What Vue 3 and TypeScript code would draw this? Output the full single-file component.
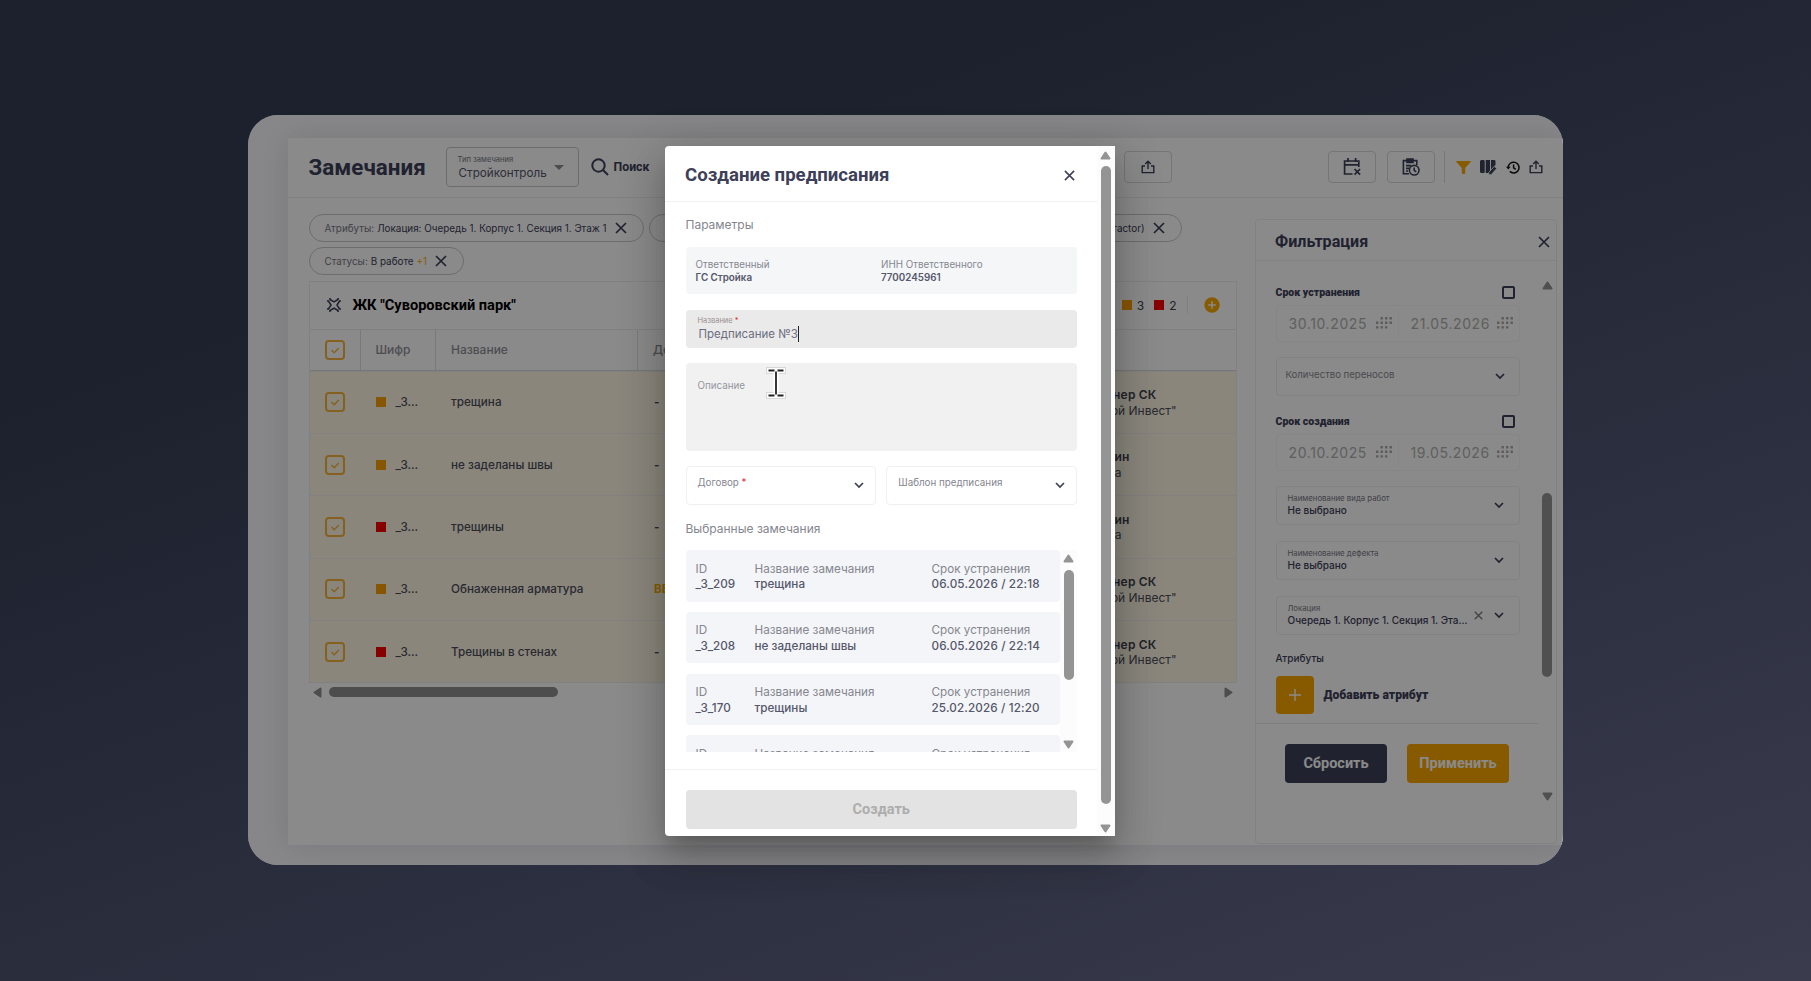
<template>
  <div class="stage">
    <div class="frame">
      <div class="app">
        <header class="topbar">
          <h1 class="page-title">Замечания</h1>
          <div class="type-select">
            <div>
              <div class="type-label">Тип замечания</div>
              <div class="type-value">Стройконтроль</div>
            </div>
            <svg class="caret-down" width="10" height="5" viewBox="0 0 10 5"><path d="M0 0h10L5 5z" /></svg>
          </div>
          <div class="search">
            <svg width="18" height="18" viewBox="0 0 18 18" fill="none" stroke="#3d4058" stroke-width="2"><circle cx="7.5" cy="7.5" r="6.2" /><path d="M12 12l5 5" /></svg>
            <span>Поиск</span>
          </div>
          <div class="tool-btn export-btn">
            <svg class="share" viewBox="0 0 14 14"><path d="M4 6H1.2v6.6h11.6V6H10M7 9V1.4M4.2 4L7 1.2 9.8 4" /></svg>
          </div>
          <div class="tool-btn">
            <svg width="18" height="18" viewBox="0 0 18 18" fill="none" stroke="#3d4058" stroke-width="1.7"><path d="M9.5 16H1.6V3h14.2v6M1.6 6.8h14.2M5 0v4M12.6 0v4M11.5 11l5.6 5.6M17.1 11l-5.6 5.6" /></svg>
          </div>
          <div class="tool-btn last">
            <svg width="18" height="18" viewBox="0 0 18 18" fill="none" stroke="#3d4058" stroke-width="1.6"><path d="M7 15.8H1.4V2.6h13.4V7M5 1h6v3.4H5zM4 7.6h5M4 10.4h3M4 13h2" /><circle cx="12.2" cy="12.2" r="4.8" /><path d="M12.2 9.5v2.8l2 1.6" /></svg>
          </div>
          <div class="topbar-divider"></div>
          <div class="topbar-icons">
            <svg width="15" height="13" viewBox="0 0 15 13"><path d="M.8 0h13.4q1 0 .4 1L9.2 7v5q0 1-1 1H7q-1.2-.2-1.2-1.2V7L.4 1Q-.2 0 .8 0z" fill="#f9ab00" /></svg>
            <svg width="17" height="15" viewBox="0 0 17 15" fill="#3d4058"><path d="M0 1.5Q0 0 1.5 0h2.3q.9 0 .9 1.5v10q0 1.500-.9 1.500H1.500Q0 13 0 11.500zM5.700 0h4.300v13H5.700zM11 0h3.200q1.300 0 1.300 1.300V5L11 9.500z" /><path d="M8.800 14.800v-2.500l5.600-6 2.300 2.200-5.600 6.300z" stroke="#fff" stroke-width=".8" /></svg>
            <svg width="14" height="13" viewBox="0 0 14 13" fill="none" stroke="#111" stroke-width="1.5"><path d="M2.2 6.500a5.400 5.400 0 1 1 1.600 3.900M7.600 3.500v3.300l2.200 1.500" /><path d="M0 5.800h4.600L2.300 8.600z" fill="#111" stroke="none" /></svg>
            <svg class="share" viewBox="0 0 14 14"><path d="M4 6H1.2v6.6h11.6V6H10M7 9V1.4M4.2 4L7 1.2 9.8 4" /></svg>
          </div>
        </header>

        <div class="body">
          <main class="main">
            <div class="chips">
              <div class="chip chip-attrs"><span class="chip-key">Атрибуты:</span><span>Локация: Очередь 1. Корпус 1. Секция 1. Этаж 1</span><svg class="cross chip-cross" viewBox="0 0 12 12"><path d="M1 1l10 10M11 1L1 11" /></svg></div>
              <div class="chip chip-wide"><span>Ответственный: ГС Стройка (contractor)</span><svg class="cross chip-cross" viewBox="0 0 12 12"><path d="M1 1l10 10M11 1L1 11" /></svg></div>
              <div class="chip chip-status"><span class="chip-key">Статусы:</span><span>В работе <i>+1</i></span><svg class="cross chip-cross" viewBox="0 0 12 12"><path d="M1 1l10 10M11 1L1 11" /></svg></div>
            </div>

            <section class="table">
              <div class="table-title">
                <svg width="14" height="14" viewBox="0 0 14 14" fill="none" stroke="#3d4058" stroke-width="1.6"><path d="M3 0v1.500l4 2.400 4-2.400V0M3 14v-1.500l4-2.400 4 2.400V14M0 3h1.500L4 7l-2.500 4H0M14 3h-1.500L10 7l2.500 4H14" /></svg>
                <b>ЖК "Суворовский парк"</b>
                <div class="counts">
                  <i class="sq orange"></i><span>3</span>
                  <i class="sq red"></i><span>2</span>
                  <em></em>
                  <svg width="16" height="16" viewBox="0 0 16 16"><circle cx="8" cy="8" r="7.7" fill="#f9ab00" /><path d="M8 4.2v7.6M4.2 8h7.6" stroke="#fff" stroke-width="1.5" /></svg>
                </div>
              </div>
              <div class="table-row table-head">
                <div class="cell"><span class="check"><svg viewBox="0 0 20 20"><path d="M6.5 10l2.700 2.700 4.600-4.700" /></svg></span></div>
                <div class="cell">Шифр</div>
                <div class="cell">Название</div>
                <div class="cell">Договор</div>
                <div class="cell"></div>
              </div>
              <div v-for="row in rows" :key="row.name" class="table-row">
                <div class="cell"><span class="check"><svg viewBox="0 0 20 20"><path d="M6.5 10l2.700 2.700 4.600-4.700" /></svg></span></div>
                <div class="cell"><i class="sq" :class="row.color"></i><span class="code">_3...</span></div>
                <div class="cell">{{ row.name }}</div>
                <div class="cell contract" :class="{ accent: row.contract !== '-' }">{{ row.contract }}</div>
                <div class="cell person" :class="{ short: row.org === 'ГС Стройка' }">
                  <b>{{ row.person }}</b>
                  <span>{{ row.org }}</span>
                </div>
              </div>
            </section>
            <div class="h-scroll">
              <svg width="9" height="11" viewBox="0 0 9 11"><path d="M7.500 1.500v8L1.500 5.500z" /></svg>
              <div class="h-thumb"></div>
              <svg width="9" height="11" viewBox="0 0 9 11"><path d="M1.500 1.500v8l6-4z" /></svg>
            </div>
          </main>

          <aside class="filter">
            <div class="filter-head">
              <b>Фильтрация</b>
              <svg class="cross filter-cross" viewBox="0 0 12 12"><path d="M1 1l10 10M11 1L1 11" /></svg>
            </div>
            <div class="filter-main">
              <div class="filter-form">
                <template v-for="d in dates" :key="d.title">
                  <div class="date-title"><b>{{ d.title }}</b><i></i></div>
                  <div class="date-box">
                    <div v-for="v in [d.from, d.to]" :key="v">
                      <span>{{ v }}</span>
                      <svg width="16" height="12" viewBox="0 0 16 12" fill="#aaa"><path d="M4.5 0h2.400v2.400H4.500zM9 0h2.400v2.400H9zM13.500 0h2.400v2.400h-2.400zM0 4.600h2.400V7H0zM4.500 4.600h2.400V7H4.500zM9 4.600h2.400V7H9zM13.500 4.600h2.400V7h-2.400zM0 9.200h2.400v2.400H0zM4.500 9.200h2.400v2.400H4.500zM9 9.200h2.400v2.400H9z" /></svg>
                    </div>
                  </div>
                  <div v-if="d.moves" class="f-select empty">
                    <span>Количество переносов</span>
                    <svg class="chevron" viewBox="0 0 10 7"><path d="M1 1l4 4 4-4" /></svg>
                  </div>
                </template>
                <div v-for="f in filters" :key="f.label" class="f-select">
                  <div>
                    <small>{{ f.label }}</small>
                    <span>{{ f.value }}</span>
                  </div>
                  <svg v-if="f.clear" class="cross clear" viewBox="0 0 12 12"><path d="M1 1l10 10M11 1L1 11" /></svg>
                  <svg class="chevron" viewBox="0 0 10 7"><path d="M1 1l4 4 4-4" /></svg>
                </div>
                <div class="attr-label">Атрибуты</div>
                <div class="attr-add">
                  <button><svg width="12" height="12" viewBox="0 0 12 12"><path d="M6 0v12M0 6h12" stroke="#fff" stroke-width="1.4" /></svg></button>
                  <b>Добавить атрибут</b>
                </div>
                <div class="filter-actions">
                  <button class="reset">Сбросить</button>
                  <button class="apply">Применить</button>
                </div>
              </div>
              <div class="v-scroll filter-scroll">
                <svg width="11" height="9" viewBox="0 0 11 9"><path d="M5.500 1.500L9.500 7.500h-8z" /></svg>
                <div class="v-thumb"></div>
                <svg width="11" height="9" viewBox="0 0 11 9"><path d="M5.500 7.500L9.500 1.500h-8z" /></svg>
              </div>
            </div>
          </aside>
        </div>
      </div>
      <div class="overlay"></div>
    </div>

    <div class="modal">
      <div class="modal-content">
        <div class="modal-head">
          <h2>Создание предписания</h2>
          <svg class="cross modal-cross" viewBox="0 0 12 12"><path d="M1 1l10 10M11 1L1 11" /></svg>
        </div>
        <div class="modal-body">
          <div class="section-label">Параметры</div>
          <div class="params">
            <div><span>Ответственный</span><b>ГС Стройка</b></div>
            <div><span>ИНН Ответственного</span><b>7700245961</b></div>
          </div>
          <div class="input">
            <label>Название <i>*</i></label>
            <div class="value">{{ title }}<span class="caret"></span></div>
          </div>
          <div class="textarea">
            Описание
            <svg class="ibeam" width="20" height="32" viewBox="0 0 20 32">
              <path d="M0 3.5h20M0 28.500h20" stroke="#d8d8d8" stroke-width="7" />
              <path d="M1 3.500h18M1 28.500h18M10 3v26" stroke="#fff" stroke-width="5" />
              <path d="M2.500 3.500h6M11.500 3.500h6M2.500 28.500h6M11.500 28.500h6M10 4.500v23" stroke="#222" stroke-width="1.800" />
            </svg>
          </div>
          <div class="selects">
            <div class="select"><span>Договор <i>*</i></span><svg class="chevron" viewBox="0 0 10 7"><path d="M1 1l4 4 4-4" /></svg></div>
            <div class="select"><span>Шаблон предписания</span><svg class="chevron" viewBox="0 0 10 7"><path d="M1 1l4 4 4-4" /></svg></div>
          </div>
          <div class="section-label">Выбранные замечания</div>
          <div class="list">
            <div class="items">
              <div v-for="item in items" :key="item.id" class="item">
                <div><span>ID</span><b>{{ item.id }}</b></div>
                <div><span>Название замечания</span><b>{{ item.name }}</b></div>
                <div><span>Срок устранения</span><b class="due">{{ item.due }}</b></div>
              </div>
            </div>
            <div class="v-scroll list-scroll">
              <svg width="11" height="9" viewBox="0 0 11 9"><path d="M5.500 1.500L9.500 7.500h-8z" /></svg>
              <div class="v-thumb"></div>
              <svg width="11" height="9" viewBox="0 0 11 9"><path d="M5.500 7.500L9.500 1.500h-8z" /></svg>
            </div>
          </div>
        </div>
        <div class="modal-foot">
          <button disabled>Создать</button>
        </div>
      </div>
      <div class="v-scroll modal-scroll">
        <svg width="11" height="9" viewBox="0 0 11 9"><path d="M5.500 1.500L9.500 7.500h-8z" /></svg>
        <div class="v-thumb"></div>
        <svg width="11" height="9" viewBox="0 0 11 9"><path d="M5.500 7.500L9.500 1.500h-8z" /></svg>
      </div>
    </div>
  </div>
</template>

<script setup lang="ts">
import { ref } from 'vue';

interface Remark {
  color: 'orange' | 'red';
  name: string;
  contract: string;
  person: string;
  org: string;
}

const title = ref('Предписание №3');

const rows: Remark[] = [
  { color: 'orange', name: 'трещина', contract: '-', person: 'Инженер СК', org: '"Строй Инвест"' },
  { color: 'orange', name: 'не заделаны швы', contract: '-', person: 'Админ', org: 'ГС Стройка' },
  { color: 'red', name: 'трещины', contract: '-', person: 'Админ', org: 'ГС Стройка' },
  { color: 'orange', name: 'Обнаженная арматура', contract: 'ВЕ-1', person: 'Инженер СК', org: '"Строй Инвест"' },
  { color: 'red', name: 'Трещины в стенах', contract: '-', person: 'Инженер СК', org: '"Строй Инвест"' },
];

const dates = [
  { title: 'Срок устранения', from: '30.10.2025', to: '21.05.2026', moves: true },
  { title: 'Срок создания', from: '20.10.2025', to: '19.05.2026', moves: false },
];

const filters = [
  { label: 'Наименование вида работ', value: 'Не выбрано', clear: false },
  { label: 'Наименование дефекта', value: 'Не выбрано', clear: false },
  { label: 'Локация', value: 'Очередь 1. Корпус 1. Секция 1. Эта...', clear: true },
];

const items = [
  { id: '_3_209', name: 'трещина', due: '06.05.2026 / 22:18' },
  { id: '_3_208', name: 'не заделаны швы', due: '06.05.2026 / 22:14' },
  { id: '_3_170', name: 'трещины', due: '25.02.2026 / 12:20' },
  { id: '_3_169', name: 'Обнаженная арматура', due: '25.02.2026 / 12:18' },
];
</script>

<style>
body {
  margin: 0;
  overflow: hidden;
}
</style>

<style scoped>
.stage {
  position: relative;
  box-sizing: border-box;
  width: 1811px;
  height: 981px;
  padding: 115px 0 0 248px;
  background: linear-gradient(160deg, #1d212d 0%, #1d212d 25%, #2c2f3f 66%, #3a3c4e 100%);
  font-family: Inter, "Open Sans", sans-serif;
  color: #3d4058;
  white-space: nowrap;
}

.stage * {
  box-sizing: border-box;
}

i, em {
  font-style: normal;
}

h1, h2 {
  margin: 0;
}

svg {
  display: block;
  flex: none;
}

button {
  border: 0;
  padding: 0;
  border-radius: 4px;
  color: #fff;
  font: 700 14.5px Roboto, sans-serif;
}

.frame {
  position: relative;
  width: 1315px;
  height: 750px;
  padding: 22.5px 0 20px 40px;
  border-radius: 30px;
  overflow: hidden;
  background: #fafafd;
}

.overlay {
  position: absolute;
  inset: 0;
  background: rgba(0, 0, 0, 0.46);
}

.app {
  display: flex;
  flex-direction: column;
  height: 707px;
  background: #fff;
  box-shadow: 0 0 30px rgba(60, 60, 90, 0.14);
}

.cross {
  fill: none;
  stroke: #3d4058;
  stroke-width: 1.7;
}

.share {
  width: 14px;
  height: 14px;
  fill: none;
  stroke: #3d4058;
  stroke-width: 1.4;
}

.chevron {
  width: 10px;
  height: 7px;
  fill: none;
  stroke: #3d4058;
  stroke-width: 1.7;
}

/* Top bar */
.topbar {
  display: flex;
  align-items: center;
  flex: none;
  height: 60px;
  padding: 0 20px 0 20.5px;
  border-bottom: 1px solid #ececf0;
}

.page-title {
  width: 137px;
  font: 700 22.4px Roboto, sans-serif;
}

.type-select {
  display: flex;
  align-items: center;
  justify-content: space-between;
  width: 133px;
  height: 40px;
  padding: 0 14px 0 11px;
  border: 1px solid #c8c8cc;
  border-radius: 4px;
}

.type-label {
  font-size: 7.6px;
  line-height: 12px;
  color: #777783;
}

.type-value {
  font-size: 11.7px;
  line-height: 15px;
  padding-left: 1px;
  color: #55586c;
}

.caret-down {
  fill: #8c8c90;
}

.search {
  display: flex;
  align-items: center;
  gap: 5px;
  margin-left: 12px;
  font: 700 12.3px Roboto, sans-serif;
}

.tool-btn {
  display: grid;
  place-items: center;
  width: 48px;
  height: 32px;
  margin-right: 11px;
  border: 1px solid #d8d8dc;
  border-radius: 4px;
}

.tool-btn.last {
  margin-right: 9px;
}

.export-btn {
  margin-left: auto;
  margin-right: 156px;
}

.topbar-divider {
  width: 1px;
  height: 32px;
  margin-right: 11px;
  background: #dcdce0;
}

.topbar-icons {
  display: flex;
  align-items: center;
  gap: 9px;
}

.body {
  display: flex;
  flex: 1;
}

.main {
  width: 967px;
  padding: 16px 0 0 20.5px;
}

/* Filter chips above the table */
.chips {
  display: flex;
  flex-wrap: wrap;
  align-content: flex-start;
  gap: 5px;
  height: 67px;
}

.chip {
  display: flex;
  align-items: center;
  height: 28px;
  padding-left: 15px;
  border: 1px solid #c9c9cf;
  border-radius: 14px;
  font-size: 9.9px;
}

.chip-attrs {
  width: 335px;
}

.chip-wide {
  justify-content: flex-end;
  width: 533px;
  padding-right: 16px;
}

.chip-status {
  width: 155px;
}

.chip i {
  color: #f9ab00;
}

.chip-key {
  margin-right: 3px;
  color: #777783;
}

.chip-cross {
  width: 12px;
  height: 12px;
  margin-left: 8px;
}

/* Remarks table */
.table {
  width: 928px;
  border: 1px solid #efeff3;
}

.table-title {
  display: flex;
  align-items: center;
  height: 47px;
  padding: 0 16px 0 17px;
  color: #000;
}

.table-title b {
  margin-left: 12px;
  font: 700 14.6px Roboto, sans-serif;
}

.counts {
  display: flex;
  align-items: center;
  margin-left: auto;
  font-size: 12px;
}

.counts .sq {
  margin-right: 5px;
}

.counts span {
  margin-right: 10px;
  color: #3d3d48;
}

.counts em {
  width: 1px;
  height: 18px;
  margin-right: 16px;
  background: #ececf0;
}

.sq {
  flex: none;
  width: 10px;
  height: 10px;
}

.orange {
  background: #f9a000;
}

.red {
  background: #f90000;
}

.table-row {
  display: grid;
  grid-template-columns: 51px 75.5px 202px 380px 1fr;
  height: 62.4px;
  border-top: 1px solid #f1efea;
  background: #fff8e6;
  font-size: 11.7px;
  font-weight: 500;
  color: #4c4d58;
}

.table-head {
  height: 42px;
  background: #fff;
  border-top-color: #ececf0;
  border-bottom: 1px solid #dcdce0;
  color: #8e8e96;
  font-size: 12px;
}

.table-head .cell {
  border-right: 1px solid #dfdfe5;
}

.table-head .cell:nth-child(n + 4) {
  border-right: 0;
}

.cell {
  display: flex;
  align-items: center;
  padding-left: 15px;
}

.contract {
  padding-left: 16px;
  font-weight: 700;
}

.code {
  margin-left: 10px;
}

.accent {
  color: #f9ab00;
}

.person {
  flex-direction: column;
  align-items: flex-end;
  justify-content: center;
  padding-top: 1px;
  padding-right: 59px;
  font-size: 12px;
  line-height: 15.6px;
}

.person b {
  margin-right: 20px;
  font-weight: 600;
  letter-spacing: 0.2px;
  color: #3f404c;
}

.person span {
  font-weight: 400;
}

.person.short {
  padding-right: 114px;
}

.person.short b {
  margin-right: -8px;
}

.check {
  width: 20px;
  height: 20px;
  border: 2px solid #f5b43c;
  border-radius: 4px;
}

.check svg {
  margin: -2px;
  width: 20px;
  height: 20px;
  fill: none;
  stroke: #f5b43c;
  stroke-width: 1.4;
}

.h-scroll {
  display: flex;
  align-items: center;
  justify-content: space-between;
  width: 928px;
  height: 18px;
  padding: 0 4px;
  fill: #8e8e8e;
  stroke: #8e8e8e;
  stroke-width: 2;
  stroke-linejoin: round;
}

.h-thumb {
  width: 229px;
  height: 10px;
  margin: 0 auto 0 7px;
  border-radius: 5px;
  background: #8e8e8e;
}

/* Filter panel */
.filter {
  width: 302px;
  height: 625.5px;
  margin-top: 21px;
  border: 1px solid #efeff3;
  border-radius: 4px;
}

.filter-head {
  display: flex;
  align-items: center;
  justify-content: space-between;
  height: 41px;
  padding: 4px 6px 0 19px;
  border-bottom: 1px solid #f1f1f4;
}

.filter-head b {
  font: 700 16.1px Roboto, sans-serif;
}

.filter-cross {
  width: 12px;
  height: 12px;
}

.filter-main {
  display: flex;
}

.filter-form {
  width: 284px;
  padding: 24.5px 0 0 19.5px;
}

.date-title {
  display: flex;
  justify-content: space-between;
  align-items: center;
  height: 14px;
  padding-right: 23px;
  font: 700 10.5px Roboto, sans-serif;
}

.date-title i {
  width: 13px;
  height: 13px;
  border: 2px solid #3d4058;
  border-radius: 2px;
}

.date-box {
  display: flex;
  align-items: center;
  width: 244px;
  height: 36.5px;
  margin: 6px 0 15px;
  border: 1px solid #f7f7f8;
  border-radius: 4px;
  color: #b0b0b0;
  font-size: 14px;
  letter-spacing: 0.6px;
}

.date-box div {
  display: flex;
  align-items: center;
  justify-content: space-between;
  width: 122px;
  height: 27px;
  padding: 0 6px 0 12px;
}

.date-box div + div {
  border-left: 1px solid #f8f8f9;
}

.f-select {
  display: flex;
  align-items: center;
  width: 244px;
  height: 39.5px;
  margin-bottom: 15.5px;
  padding: 0 15px 0 11px;
  border: 1px solid #f1f1f4;
  border-radius: 4px;
}

.f-select.empty {
  margin-bottom: 18px;
  padding: 0 14px 0 9px;
  font-size: 9.6px;
  color: #8a8a92;
}

.f-select.empty span {
  margin-top: -4px;
}

.f-select small {
  display: block;
  font-size: 7.8px;
  line-height: 11px;
  color: #777783;
}

.f-select div span {
  display: block;
  font-size: 10px;
  font-weight: 500;
  line-height: 13px;
}

.f-select .chevron {
  margin-left: auto;
}

.clear {
  width: 9px;
  height: 9px;
  margin-left: auto;
  stroke: #777783;
}

.f-select .clear + .chevron {
  margin-left: 11px;
}

.attr-label {
  height: 13px;
  margin-top: 17px;
  font-size: 10px;
  font-weight: 500;
  line-height: 13px;
}

.attr-add {
  display: flex;
  align-items: center;
  gap: 10px;
  margin: 11px 0 9px;
  font: 700 12.1px Roboto, sans-serif;
}

.attr-add button {
  display: grid;
  place-items: center;
  width: 38px;
  height: 38px;
  background: #f9a600;
}

.filter-actions {
  display: flex;
  gap: 20px;
  margin-left: -19.5px;
  padding: 20px 0 0 29px;
  border-top: 1px solid #e6e7ee;
}

.filter-actions button {
  width: 102px;
  height: 39px;
}

.filter-actions .reset {
  background: #3d4058;
}

.filter-actions .apply {
  background: #f9a600;
}

/* Scrollbars with arrow buttons */
.v-scroll {
  display: flex;
  flex-direction: column;
  align-items: center;
  fill: #949494;
  stroke: #949494;
  stroke-width: 2;
  stroke-linejoin: round;
}

.v-thumb {
  width: 10px;
  border-radius: 5px;
  background: #949494;
}

.v-scroll svg:last-child {
  margin-top: auto;
}

.filter-scroll {
  width: 18px;
  height: 520px;
  margin-top: 20px;
}

.filter-scroll .v-thumb {
  height: 184px;
  margin-top: 203px;
}

.list-scroll {
  width: 17px;
  padding: 4px 0 3px;
  background: #fcfcfc;
}

.list-scroll .v-thumb {
  height: 110px;
  margin-top: 7px;
}

.modal-scroll {
  width: 17.5px;
  padding: 5px 0 3px;
  background: #fcfcfc;
}

.modal-scroll .v-thumb {
  height: 638px;
  margin-top: 6px;
}

/* Dialog */
.modal {
  position: absolute;
  left: 665px;
  top: 146px;
  display: flex;
  width: 449.5px;
  height: 690px;
  border-radius: 4px 0 0 4px;
  overflow: hidden;
  background: #fff;
  box-shadow: 0 11px 15px -7px rgba(0, 0, 0, 0.2), 0 24px 38px 3px rgba(0, 0, 0, 0.14), 0 9px 46px 8px rgba(0, 0, 0, 0.12);
}

.modal-content {
  width: 432px;
}

.modal-head {
  display: flex;
  align-items: center;
  justify-content: space-between;
  height: 55.5px;
  padding: 4px 22px 0 20px;
  border-bottom: 1px solid #f1f1f4;
}

.modal-head h2 {
  font: 700 18.6px Roboto, sans-serif;
}

.modal-cross {
  width: 11px;
  height: 11px;
}

.modal-body {
  height: 567px;
  padding: 15.5px 20px 0 20.5px;
}

.section-label {
  font-size: 12px;
  line-height: 16px;
  color: #85868f;
}

.params {
  display: flex;
  align-items: center;
  height: 47px;
  margin: 14px 0 15.5px;
  padding: 1px 0 0 10px;
  border-radius: 4px;
  background: #f4f6f8;
  font-size: 9.8px;
  line-height: 13.5px;
}

.params div {
  width: 185.5px;
}

.params span, .item span {
  display: block;
  color: #85868f;
}

.params b, .item b {
  display: block;
  font-weight: 500;
  color: #55576a;
}

.params b {
  font-weight: 600;
}

.input {
  height: 38px;
  margin-bottom: 15px;
  padding: 6px 12px;
  border-radius: 4px;
  background: #eaeaea;
}

.input label {
  display: block;
  font-size: 7.5px;
  line-height: 9px;
  color: #9a8f92;
}

.input i, .select i {
  color: #e03030;
}

.value {
  display: flex;
  align-items: center;
  height: 19px;
  padding-left: 1px;
  font-size: 11.5px;
  color: #6c6e80;
}

.caret {
  width: 1px;
  height: 16px;
  background: #222;
}

.textarea {
  position: relative;
  height: 88.5px;
  padding: 16px 12px;
  border-radius: 4px;
  background: #f1f1f1;
  font-size: 9.8px;
  line-height: 13px;
  color: #94959e;
}

.ibeam {
  position: absolute;
  left: 80.5px;
  top: 4px;
}

.selects {
  display: flex;
  gap: 10px;
  margin: 15px 0 16px;
}

.select {
  display: flex;
  align-items: center;
  justify-content: space-between;
  flex: 1;
  height: 38.5px;
  padding: 0 11px;
  border: 1px solid #f0f0f2;
  border-radius: 4px;
  font-size: 9.8px;
  color: #85868f;
}

.select span {
  margin-top: -5px;
}

.list {
  display: flex;
  height: 202px;
  margin-top: 13.5px;
  overflow: hidden;
}

.items {
  flex: 1;
}

.item {
  display: grid;
  grid-template-columns: 59px 177px 1fr;
  height: 51.5px;
  margin-bottom: 10.3px;
  padding: 11.5px 0 0 10px;
  border-radius: 4px;
  background: #f4f5f8;
  font-size: 11.7px;
  line-height: 15.8px;
}

.item .due {
  letter-spacing: 0.13px;
}

.modal-foot {
  padding: 20.5px 20px 0 20.5px;
  border-top: 1px solid #f1f1f4;
}

.modal-foot button {
  display: block;
  width: 100%;
  height: 39px;
  background: #e3e3e3;
  color: #adadad;
}
</style>
